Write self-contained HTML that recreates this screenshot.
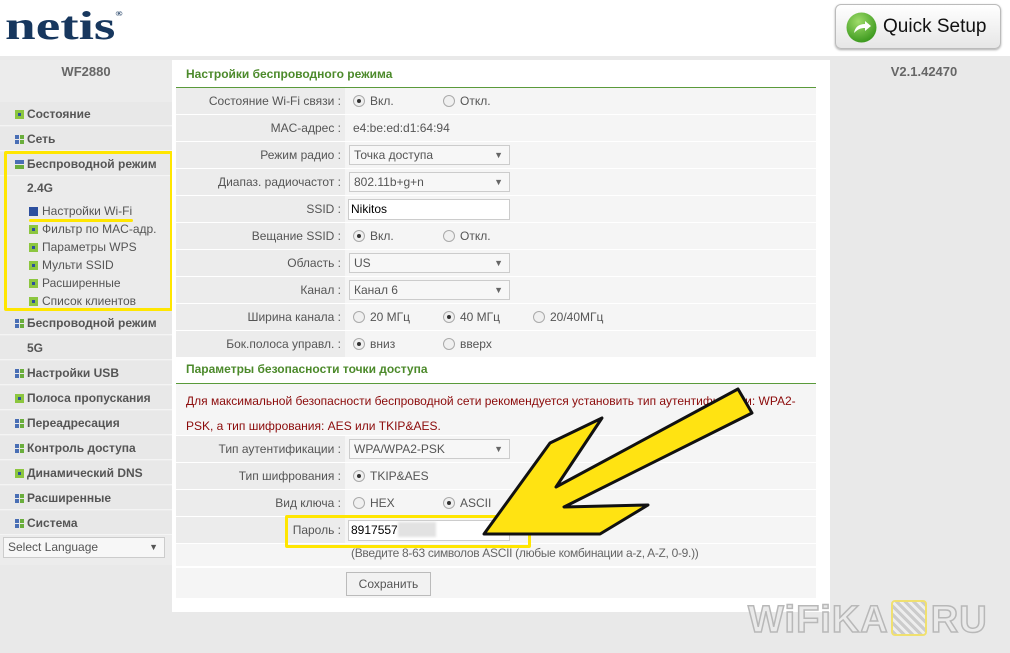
<!DOCTYPE html>
<html><head><meta charset="utf-8"><style>
*{margin:0;padding:0;box-sizing:border-box}
body{width:1010px;height:653px;background:#e9e9e9;font-family:"Liberation Sans",Arial,sans-serif;font-size:12px;color:#555;position:relative;overflow:hidden}
.a{position:absolute}
.hdr{left:0;top:0;width:1010px;height:56px;background:#fff}
.logo{left:5px;top:2px;font-family:"Liberation Serif",serif;font-weight:bold;font-size:40px;color:#17375e;transform:scaleX(1.38);transform-origin:0 0;white-space:nowrap}
.qs{left:835px;top:4px;width:166px;height:45px;border:1px solid #bbb;border-radius:6px;background:linear-gradient(#fff,#e6e6e6);box-shadow:0 1px 2px #aaa}
.qs span{position:absolute;left:47px;top:11px;font-size:19px;color:#111}
.side{left:0;top:60px;width:172px;height:505px;background:#ececec}
.it{position:absolute;left:0;width:172px;height:24px;background:#e8e8e8;border-bottom:1px solid #f4f4f4;font-weight:bold;color:#555;font-size:12px;line-height:24px;padding-left:27px}
.ic{position:absolute;left:15px;top:8px;width:9px;height:9px}
.g4{background:linear-gradient(90deg,#4a6fb5 50%,#6aae3c 50%);}
.g4:after{content:"";position:absolute;left:0;top:4px;width:9px;height:1px;background:#e8e8e8}
.g4:before{content:"";position:absolute;left:4px;top:0;width:1px;height:9px;background:#e8e8e8;z-index:1}
.gd{background:#8cc63f}
.gd:after{content:"";position:absolute;left:3px;top:3px;width:3px;height:3px;background:#2c4f9e}
.sub{position:absolute;left:42px;font-size:12px;color:#555}
.sub i{position:absolute;left:-13px;top:3px;width:9px;height:9px;background:#8cc63f}
.sub i:after{content:"";position:absolute;left:3px;top:3px;width:3px;height:3px;background:#2c4f9e}
.panel{left:172px;top:60px;width:658px;height:552px;background:#fff}
.sec{position:absolute;left:186px;font-size:12px;color:#4c8a2b;font-weight:bold}
.gl{position:absolute;left:176px;width:640px;height:1px;background:#5a9a3a}
.lb{position:absolute;left:176px;width:169px;height:26px;background:#ececec;text-align:right;padding-right:4px;line-height:26px;color:#555}
.vl{position:absolute;left:345px;width:471px;height:26px;background:#f5f5f5;line-height:26px;padding-left:8px;color:#555}
.r{display:inline-block;width:12px;height:12px;border:1px solid #aaa;border-radius:50%;background:#f0f0f0;vertical-align:-2px;margin-right:5px;position:relative}
.r.on:after{content:"";position:absolute;left:3px;top:3px;width:4px;height:4px;border-radius:50%;background:#333}
.sel{position:absolute;top:3px;left:4px;width:161px;height:20px;border:1px solid #ccc;background:#f7f7f7;line-height:18px;padding-left:4px;color:#555}
.sel:after{content:"▼";position:absolute;right:6px;top:0;font-size:9px;color:#666}
.inp{position:absolute;top:3px;left:3px;width:162px;height:21px;border:1px solid #ccc;background:#fff;line-height:19px;padding-left:2px;color:#000}
</style></head><body>
<div class="a hdr"></div>
<div class="a logo">netis<span style="font-size:7px;vertical-align:top;position:relative;top:8px">®</span></div>
<div class="a qs"><svg class="a" style="left:10px;top:7px" width="31" height="31" viewBox="0 0 31 31"><defs><radialGradient id="gg" cx="40%" cy="30%" r="70%"><stop offset="0" stop-color="#9fdc6a"/><stop offset="1" stop-color="#3d9a1f"/></radialGradient></defs><circle cx="15.5" cy="15.5" r="15" fill="url(#gg)"/><path d="M8 21c1-6 5-9 11-9v-3l6 5-6 5v-3c-4 0-7 1-11 5z" fill="#fff"/></svg><span>Quick Setup</span></div>

<div class="a side"></div>
<div class="a" style="left:0;top:64px;width:172px;text-align:center;font-weight:bold;color:#666;font-size:13px">WF2880</div>
<div class="a" style="left:838px;top:64px;width:172px;text-align:center;font-weight:bold;color:#666;font-size:13px">V2.1.42470</div>

<div class="it" style="top:102px"><i class="ic gd"></i>Состояние</div>
<div class="it" style="top:127px"><i class="ic g4"></i>Сеть</div>
<div class="it" style="top:152px"><i class="ic" style="background:linear-gradient(#4a6fb5 45%,#e8e8e8 45%,#e8e8e8 55%,#6aae3c 55%)"></i>Беспроводной режим</div>
<div class="a" style="left:0;top:177px;width:172px;height:134px;background:#ebebeb"></div>
<div class="a" style="left:27px;top:181px;font-weight:bold;color:#555">2.4G</div>
<div class="sub" style="top:204px"><i style="background:#2c4f9e"></i><span style="color:#555">Настройки Wi-Fi</span></div>
<div class="a" style="left:29px;top:219px;width:104px;height:3px;background:#ffe600;border-radius:2px"></div>
<div class="sub" style="top:222px"><i></i>Фильтр по MAC-адр.</div>
<div class="sub" style="top:240px"><i></i>Параметры WPS</div>
<div class="sub" style="top:258px"><i></i>Мульти SSID</div>
<div class="sub" style="top:276px"><i></i>Расширенные</div>
<div class="sub" style="top:294px"><i></i>Список клиентов</div>
<div class="it" style="top:311px"><i class="ic g4"></i>Беспроводной режим</div>
<div class="it" style="top:336px;font-weight:bold">5G</div>
<div class="it" style="top:361px"><i class="ic g4"></i>Настройки USB</div>
<div class="it" style="top:386px"><i class="ic gd"></i>Полоса пропускания</div>
<div class="it" style="top:411px"><i class="ic g4"></i>Переадресация</div>
<div class="it" style="top:436px"><i class="ic g4"></i>Контроль доступа</div>
<div class="it" style="top:461px"><i class="ic gd"></i>Динамический DNS</div>
<div class="it" style="top:486px"><i class="ic g4"></i>Расширенные</div>
<div class="it" style="top:511px"><i class="ic g4"></i>Система</div>
<div class="a" style="left:3px;top:537px;width:162px;height:21px;border:1px solid #ccc;background:#f7f7f7;line-height:19px;padding-left:4px;color:#555">Select Language<span style="position:absolute;right:6px;font-size:9px">▼</span></div>
<div class="a" style="left:4px;top:151px;width:169px;height:160px;border:3px solid #ffe600;border-radius:2px"></div>

<div class="a panel"></div>
<div class="sec" style="top:67px">Настройки беспроводного режима</div>
<div class="gl" style="top:87px"></div>

<div class="lb" style="top:88px">Состояние Wi-Fi связи :</div><div class="vl" style="top:88px"><i class="r on"></i>Вкл.<span style="position:absolute;left:98px"><i class="r"></i>Откл.</span></div>
<div class="lb" style="top:115px">MAC-адрес :</div><div class="vl" style="top:115px">e4:be:ed:d1:64:94</div>
<div class="lb" style="top:142px">Режим радио :</div><div class="vl" style="top:142px"><div class="sel">Точка доступа</div></div>
<div class="lb" style="top:169px">Диапаз. радиочастот :</div><div class="vl" style="top:169px"><div class="sel">802.11b+g+n</div></div>
<div class="lb" style="top:196px">SSID :</div><div class="vl" style="top:196px"><div class="inp">Nikitos</div></div>
<div class="lb" style="top:223px">Вещание SSID :</div><div class="vl" style="top:223px"><i class="r on"></i>Вкл.<span style="position:absolute;left:98px"><i class="r"></i>Откл.</span></div>
<div class="lb" style="top:250px">Область :</div><div class="vl" style="top:250px"><div class="sel">US</div></div>
<div class="lb" style="top:277px">Канал :</div><div class="vl" style="top:277px"><div class="sel">Канал 6</div></div>
<div class="lb" style="top:304px">Ширина канала :</div><div class="vl" style="top:304px"><i class="r"></i>20 МГц<span style="position:absolute;left:98px"><i class="r on"></i>40 МГц</span><span style="position:absolute;left:188px"><i class="r"></i>20/40МГц</span></div>
<div class="lb" style="top:331px">Бок.полоса управл. :</div><div class="vl" style="top:331px"><i class="r on"></i>вниз<span style="position:absolute;left:98px"><i class="r"></i>вверх</span></div>

<div class="sec" style="top:362px">Параметры безопасности точки доступа</div>
<div class="gl" style="top:383px"></div>
<div class="a" style="left:176px;top:384px;width:640px;height:51px;background:#f5f5f5"></div>
<div class="a" style="left:186px;top:389px;width:625px;line-height:25px;color:#8b0a0a">Для максимальной безопасности беспроводной сети рекомендуется установить тип аутентификации: WPA2-PSK, а тип шифрования: AES или TKIP&amp;AES.</div>
<div class="lb" style="top:436px">Тип аутентификации :</div><div class="vl" style="top:436px"><div class="sel">WPA/WPA2-PSK</div></div>
<div class="lb" style="top:463px">Тип шифрования :</div><div class="vl" style="top:463px"><i class="r on"></i>TKIP&amp;AES</div>
<div class="lb" style="top:490px">Вид ключа :</div><div class="vl" style="top:490px"><i class="r"></i>HEX<span style="position:absolute;left:98px"><i class="r on"></i>ASCII</span></div>
<div class="lb" style="top:517px">Пароль :</div><div class="vl" style="top:517px"><div class="inp">8917557<span style="display:inline-block;width:38px;height:15px;background:#e2e2e2;vertical-align:-3px;filter:blur(1px)"></span></div></div>
<div class="a" style="left:176px;top:544px;width:640px;height:22px;background:#f5f5f5"></div>
<div class="a" style="left:351px;top:546px;font-size:12px;color:#666;letter-spacing:-0.3px">(Введите 8-63 символов ASCII (любые комбинации a-z, A-Z, 0-9.))</div>
<div class="a" style="left:176px;top:568px;width:640px;height:30px;background:#f5f5f5"></div>
<div class="a" style="left:346px;top:572px;width:85px;height:24px;border:1px solid #bbb;background:#f2f2f2;text-align:center;line-height:22px;color:#555">Сохранить</div>

<div class="a" style="left:285px;top:515px;width:246px;height:33px;border:3px solid #ffe600;border-radius:2px"></div>
<svg class="a" style="left:0;top:0" width="1010" height="653"><polygon points="484,534 550,443 602,418 556,487 738,389 752,413 564,507 648,505 600,534" fill="#ffe312" stroke="#111" stroke-width="3" stroke-linejoin="round"/></svg>

<div class="a" style="left:748px;top:600px;font-size:38px;font-weight:bold;color:#eaeaea;-webkit-text-stroke:1.5px #b8b8b8;letter-spacing:1px;white-space:nowrap;line-height:40px">WiFiKA<span style="display:inline-block;width:36px;height:36px;border:2px solid #f0e070;border-radius:4px;vertical-align:-4px;margin:0 4px 0 2px;background:repeating-linear-gradient(45deg,#ccc 0 3px,#eee 3px 6px)"></span>RU</div>
</body></html>
